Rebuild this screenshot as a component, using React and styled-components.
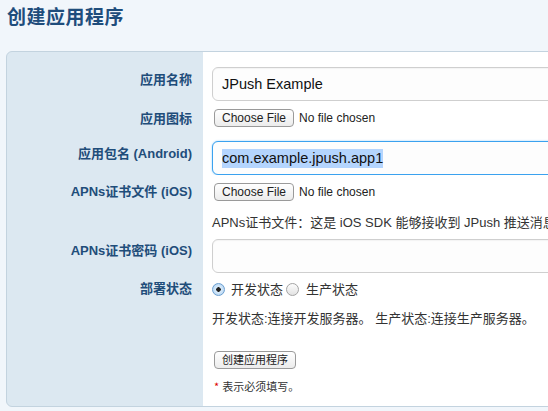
import React from "react";
import styled, { createGlobalStyle } from "styled-components";

const GlobalStyle = createGlobalStyle`
  html, body {
    margin: 0;
    padding: 0;
    background: #f1f6fb;
    overflow: hidden;
  }
  body {
    font-family: "Liberation Sans", "Noto Sans CJK SC", sans-serif;
    color: #333;
  }
`;

const Page = styled.div`
  width: 548px;
  height: 411px;
  overflow: hidden;
`;

const Heading = styled.h1`
  margin: 0;
  padding: 3px 0 0 7px;
  height: 48px;
  box-sizing: border-box;
  font-size: 19px;
  line-height: 26px;
  font-weight: bold;
  color: #1f4d7c;
  letter-spacing: 0.5px;
  font-family: "Noto Sans CJK SC", sans-serif;
`;

const Panel = styled.div`
  margin-left: 6px;
  margin-top: 3px;
  width: 640px;
  border: 1px solid #c3d3df;
  border-radius: 6px;
  overflow: hidden;
  background: #dce8f1;
`;

const Row = styled.div`
  display: grid;
  grid-template-columns: 196px 1fr;
`;

const Label = styled.div`
  padding: ${(p) => p.$pt}px 11px 0 0;
  text-align: right;
  font-size: 13px;
  line-height: 18px;
  font-weight: bold;
  color: #1f4d7a;
  font-family: "Liberation Sans", "Noto Sans CJK SC", sans-serif;
`;

const Field = styled.div`
  background: #fff;
  padding: ${(p) => p.$pt}px 0 ${(p) => p.$pb || 0}px 9px;
  display: flex;
  flex-direction: column;
  align-items: flex-start;
`;

const TextBox = styled.div`
  box-sizing: border-box;
  width: 420px;
  height: 34px;
  border: 1px solid ${(p) => (p.$focus ? "#3ba2ef" : "#cfcfcf")};
  box-shadow: ${(p) => (p.$focus ? "0 0 2px #8cc8f5" : "inset 0 1px 1px rgba(0,0,0,0.04)")};
  border-radius: 6px;
  background: #fdfdfd;
  padding: 0 9px;
  display: flex;
  align-items: center;
  font-size: 14.5px;
  color: #111;
  font-family: "Liberation Sans", sans-serif;
`;

const Selected = styled.span`
  background: #b4d5fe;
  line-height: 19px;
`;

const FilePicker = styled.div`
  display: flex;
  align-items: center;
  gap: 5px;
  padding-left: 2px;
  font-size: 12px;
  color: #222;
`;

const SmallButton = styled.button`
  box-sizing: border-box;
  height: 18px;
  padding: 0 ${(p) => p.$px || 7}px;
  border: 1px solid #9a9a9a;
  border-radius: 4px;
  background: linear-gradient(#ffffff, #ececec);
  font-size: ${(p) => p.$fs || 12}px;
  line-height: 16px;
  color: #222;
  font-family: "Liberation Sans", "Noto Sans CJK SC", sans-serif;
  cursor: default;
`;

const HelpText = styled.div`
  margin-top: ${(p) => p.$mt}px;
  font-size: 13px;
  line-height: 18px;
  color: #333;
  white-space: nowrap;
  font-family: "Liberation Sans", "Noto Sans CJK SC", sans-serif;
`;

const RadioGroup = styled.div`
  display: flex;
  align-items: center;
  font-size: 13px;
  line-height: 18px;
  color: #333;
  font-family: "Noto Sans CJK SC", sans-serif;
`;

const RadioDot = styled.span`
  box-sizing: border-box;
  width: 13px;
  height: 13px;
  border-radius: 50%;
  margin: 0 ${(p) => (p.$checked ? 6 : 7)}px 0 0;
  border: 1px solid ${(p) => (p.$checked ? "#6c9fd0" : "#a3a3a3")};
  background: ${(p) =>
    p.$checked
      ? "radial-gradient(circle, #222 0 2px, #d9ebfb 2.5px, #a9cdee 100%)"
      : "linear-gradient(#fdfdfd, #e2e2e2)"};
  display: inline-block;
`;

const RadioText = styled.span`
  margin-right: 3px;
`;

const Note = styled.div`
  margin-top: 10px;
  font-size: 11px;
  line-height: 14px;
  color: #333;
  padding-left: 2px;
  font-family: "Noto Sans CJK SC", sans-serif;
`;

const Star = styled.span`
  color: #d00;
  margin-right: 3px;
`;

export default function App() {
  return (
    <Page>
      <GlobalStyle />
      <Heading>创建应用程序</Heading>
      <Panel>
        <Row>
          <Label $pt={19}>应用名称</Label>
          <Field $pt={15}>
            <TextBox>JPush Example</TextBox>
          </Field>
        </Row>
        <Row>
          <Label $pt={9}>应用图标</Label>
          <Field $pt={8}>
            <FilePicker>
              <SmallButton>Choose File</SmallButton>
              <span>No file chosen</span>
            </FilePicker>
          </Field>
        </Row>
        <Row>
          <Label $pt={17}>应用包名 (Android)</Label>
          <Field $pt={13}>
            <TextBox $focus>
              <Selected>com.example.jpush.app1</Selected>
            </TextBox>
          </Field>
        </Row>
        <Row>
          <Label $pt={8}>APNs证书文件 (iOS)</Label>
          <Field $pt={8}>
            <FilePicker>
              <SmallButton>Choose File</SmallButton>
              <span>No file chosen</span>
            </FilePicker>
            <HelpText $mt={13}>
              APNs证书文件：这是 iOS SDK 能够接收到 JPush 推送消息的证书文件。
            </HelpText>
          </Field>
        </Row>
        <Row>
          <Label $pt={10}>APNs证书密码 (iOS)</Label>
          <Field $pt={7}>
            <TextBox />
          </Field>
        </Row>
        <Row>
          <Label $pt={7}>部署状态</Label>
          <Field $pt={7} $pb={13}>
            <RadioGroup>
              <RadioDot $checked />
              <RadioText>开发状态</RadioText>
              <RadioDot />
              <RadioText>生产状态</RadioText>
            </RadioGroup>
            <HelpText $mt={12}>
              开发状态:连接开发服务器。 生产状态:连接生产服务器。
            </HelpText>
            <FilePicker style={{ marginTop: 23 }}>
              <SmallButton $fs={11} $px={7}>创建应用程序</SmallButton>
            </FilePicker>
            <Note>
              <Star>*</Star>表示必须填写。
            </Note>
          </Field>
        </Row>
      </Panel>
    </Page>
  );
}
